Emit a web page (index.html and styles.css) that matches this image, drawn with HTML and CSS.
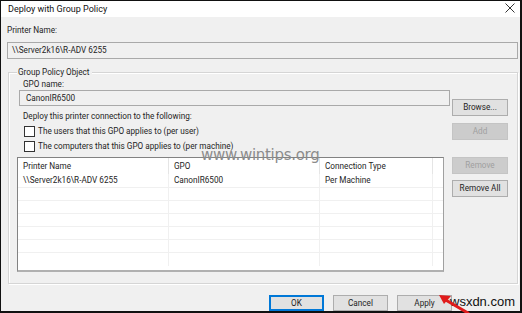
FILE: index.html
```html
<!DOCTYPE html>
<html>
<head>
<meta charset="utf-8">
<link rel="stylesheet" href="styles.css">
</head>
<body>
<div class="window">
  <div class="titlebar">
    <span class="title">Deploy with Group Policy</span>
    <svg class="close" width="10" height="10" viewBox="0 0 10 10"><path d="M0.5 0.5 L9.5 9.5 M9.5 0.5 L0.5 9.5" stroke="#333" stroke-width="1" fill="none"/></svg>
  </div>
  <div class="content">
    <div class="label pn">Printer Name:</div>
    <div class="field printer">\\Server2k16\R-ADV 6255</div>
    <div class="group">
      <div class="legend">Group Policy Object</div>
      <div class="toprow">
        <div class="left">
          <div class="label">GPO name:</div>
          <div class="field gpo">CanonIR6500</div>
          <div class="label deploy">Deploy this printer connection to the following:</div>
          <div class="check"><span class="box"></span><span>The users that this GPO applies to (per user)</span></div>
          <div class="check"><span class="box"></span><span>The computers that this GPO applies to (per machine)</span></div>
        </div>
        <div class="side">
          <div class="btn">Browse...</div>
          <div class="btn disabled">Add</div>
        </div>
      </div>
      <div class="listrow">
        <div class="list">
          <div class="row head">
            <div class="c1">Printer Name</div><div class="c2">GPO</div><div class="c3">Connection Type</div><div class="c4"></div>
          </div>
          <div class="row">
            <div class="c1">\\Server2k16\R-ADV 6255</div><div class="c2">CanonIR6500</div><div class="c3">Per Machine</div><div class="c4"></div>
          </div>
          <div class="row"><div class="c1"></div><div class="c2"></div><div class="c3"></div><div class="c4"></div></div>
          <div class="row"><div class="c1"></div><div class="c2"></div><div class="c3"></div><div class="c4"></div></div>
          <div class="row"><div class="c1"></div><div class="c2"></div><div class="c3"></div><div class="c4"></div></div>
          <div class="row"><div class="c1"></div><div class="c2"></div><div class="c3"></div><div class="c4"></div></div>
          <div class="row"><div class="c1"></div><div class="c2"></div><div class="c3"></div><div class="c4"></div></div>
          <div class="row last"><div class="c1"></div><div class="c2"></div><div class="c3"></div><div class="c4"></div></div>
        </div>
        <div class="side">
          <div class="btn disabled">Remove</div>
          <div class="btn">Remove All</div>
        </div>
      </div>
    </div>
    <div class="buttons">
      <div class="btn big default">OK</div>
      <div class="btn big">Cancel</div>
      <div class="btn big">Apply</div>
    </div>
  </div>
  <div class="wm1">www.wintips.org</div>
  <div class="wm2">wsxdn.com</div>
  <svg class="arrow" width="40" height="22" viewBox="0 0 40 22">
    <path d="M30 20 L6 6" stroke="#e01b1b" stroke-width="3" fill="none" stroke-linecap="round"/>
    <path d="M1 2 L13 3 L6 11 Z" fill="#e01b1b"/>
  </svg>
</div>
</body>
</html>
```

FILE: styles.css
```css
* { box-sizing: border-box; }
html, body { margin: 0; padding: 0; }
body {
  width: 522px;
  height: 313px;
  overflow: hidden;
  font-family: Roboto, "Noto Sans", sans-serif;
  font-size: 8.2px;
  color: #1e1e1e;
}
.window {
  position: relative;
  width: 522px;
  height: 313px;
  border: 1px solid #111;
  border-right-width: 2px;
  border-bottom-width: 2px;
  background: #f0f0f0;
  display: flex;
  flex-direction: column;
}
.titlebar {
  height: 17px;
  background: #fff;
  display: flex;
  align-items: center;
  justify-content: space-between;
  padding: 0 5px 0 7px;
}
.title { font-size: 9px; color: #111; line-height: 14px; }
.close { display: block; margin-bottom: 2px; }
.content {
  flex: 1;
  padding: 3px 2px 0 6px;
  display: flex;
  flex-direction: column;
}
.label { line-height: 14px; height: 14px; white-space: nowrap; }
.pn { margin-top: 3px; }
.field {
  height: 17px;
  border: 1px solid #a9a9a9;
  background: #f0f0f0;
  line-height: 15px;
  padding-left: 4px;
  white-space: nowrap;
}
.printer { margin-top: 5px; }
.group {
  margin-top: 13px;
  margin-left: 1px;
  height: 212px;
  border: 1px solid #d5d5d5;
  box-shadow: inset 1px 1px 0 #fff, 1px 1px 0 #fff;
  padding: 0 9px 0 8px;
  display: flex;
  flex-direction: column;
}
.legend {
  align-self: flex-start;
  margin-top: -8px;
  padding: 0 2px 0 1px;
  background: #f0f0f0;
  line-height: 14px;
  height: 14px;
}
.toprow {
  display: flex;
  justify-content: space-between;
  margin-top: -2px;
}
.left { width: 433px; padding-left: 2px; display: flex; flex-direction: column; }
.left .label:first-child { padding-left: 4px; }
.gpo { margin-top: -1px; height: 16px; line-height: 14px; padding-left: 6px; }
.deploy { margin-top: 3px; padding-left: 4px; }
.check {
  display: flex;
  align-items: center;
  height: 14px;
  margin-top: 1px;
  padding-left: 5px;
  white-space: nowrap;
}
.check .box {
  width: 11px;
  height: 11px;
  border: 1px solid #333;
  background: #fff;
  margin-right: 3px;
  flex: none;
}
.side {
  width: 56px;
  display: flex;
  flex-direction: column;
  gap: 7px;
  padding-top: 22px;
}
.btn {
  height: 17px;
  border: 1px solid #adadad;
  background: #e1e1e1;
  text-align: center;
  line-height: 15px;
  white-space: nowrap;
  color: #1e1e1e;
}
.btn.disabled { background: #cccccc; border-color: #c4c4c4; color: #a0a0a0; }
.listrow {
  display: flex;
  justify-content: space-between;
  margin-top: 4px;
}
.listrow .side { padding-top: 0; gap: 6px; }
.list {
  width: 427px;
  height: 115px;
  border: 1px solid #828282;
  border-bottom: 2px solid #b0b0b0;
  border-right: 1px solid #a0a0a0;
  background: #fff;
  overflow: hidden;
}
.row { display: flex; height: 13px; border-bottom: 1px solid #f0f0f0; }
.row.head { height: 16px; border-bottom: none; align-items: center; }
.row.head + .row { height: 14px; align-items: center; }
.row.last { border-bottom: none; }
.row > div { line-height: 13px; padding-left: 5px; white-space: nowrap; overflow: hidden; }
.c1 { width: 151px; border-right: 1px solid #f0f0f0; }
.c2 { width: 151px; border-right: 1px solid #f0f0f0; }
.c3 { width: 113px; border-right: 1px solid #f0f0f0; }
.c4 { flex: 1; }
.row.head .c1, .row.head .c2, .row.head .c3 { border-right-color: #e5e5e5; height: 16px; line-height: 16px; }
.buttons {
  display: flex;
  justify-content: flex-end;
  gap: 9px;
  padding-right: 66px;
  margin-top: 11px;
}
.btn.big { width: 55px; height: 16px; line-height: 14px; }
.btn.default { border: 2px solid #0078d7; line-height: 12px; }
.wm1 {
  position: absolute;
  left: 200px;
  top: 145px;
  font-family: "DejaVu Sans", sans-serif;
  font-size: 15px;
  color: #8c8c8c;
  letter-spacing: -0.3px;
}
.wm2 {
  position: absolute;
  left: 449px;
  top: 293px;
  font-family: "Liberation Sans", sans-serif;
  font-size: 13px;
  color: #111;
}
.arrow {
  position: absolute;
  left: 437px;
  top: 292px;
}
```
